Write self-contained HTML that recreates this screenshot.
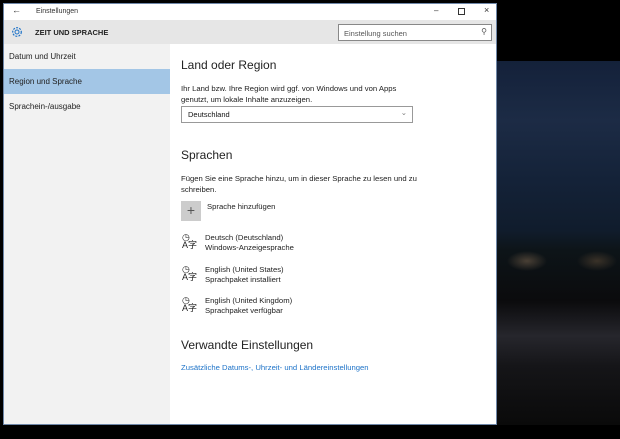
<!DOCTYPE html>
<html><head><meta charset="utf-8"><style>
*{margin:0;padding:0;box-sizing:border-box}
body{width:620px;height:439px;overflow:hidden;position:relative;background:#000;font-family:"Liberation Sans",sans-serif;color:#111}
.bg{position:absolute;left:497px;top:61px;width:123px;height:364px;
background:
radial-gradient(ellipse 20px 10px at 30px 200px,#4a4035 0,transparent 100%),
radial-gradient(ellipse 20px 10px at 100px 200px,#3a3228 0,transparent 100%),
linear-gradient(180deg,#14213a 0,#1c2b45 60px,#142238 120px,#101c2c 170px,#0d1418 190px,#0b0b0d 240px,#26262c 275px,#151518 305px,#0a0a0a 364px)}
.win{position:absolute;left:3px;top:3px;width:494px;height:422px;background:#fff;border:1px solid #6f87a8}
.title{height:16px;background:#fff;font-size:7px;color:#333;position:relative}
.hdr{height:24px;background:#e6e6e6;position:relative}
.side{position:absolute;left:0;top:40px;width:166px;bottom:0;background:#f2f2f2}
.side div{height:25px;line-height:25px;font-size:8px;padding-left:5px;color:#222}
.side .sel{background:#a3c6e6}
.c{position:absolute;left:181px;font-size:7.7px;color:#222}
h2{font-weight:normal;font-size:12px;color:#222;position:absolute;left:181px}
</style></head><body>
<div class="bg"></div>
<div class="win">
<div class="title">
<span style="position:absolute;left:8px;top:1px;font-size:9px">&#8592;</span>
<span style="position:absolute;left:32px;top:4px">Einstellungen</span>
<span style="position:absolute;left:430px;top:2px;font-size:8px">&#8211;</span>
<span style="position:absolute;left:454px;top:4px;width:7px;height:7px;border:1px solid #333"></span>
<span style="position:absolute;left:480px;top:1px;font-size:9px">&#215;</span>
</div>
<div class="hdr">
<svg style="position:absolute;left:7px;top:6px" width="12" height="12" viewBox="0 0 12 12"><circle cx="6" cy="6" r="4.3" fill="none" stroke="#1e73c8" stroke-width="1.2" stroke-dasharray="2 1.2"/><circle cx="6" cy="6" r="2" fill="none" stroke="#1e73c8" stroke-width="1"/></svg>
<span style="position:absolute;left:31px;top:8px;font-size:7.5px;font-weight:bold;color:#222">ZEIT UND SPRACHE</span>
<div style="position:absolute;left:334px;top:4px;width:154px;height:17px;border:1px solid #888;background:#fff;font-size:7.5px;color:#555;padding:4px 5px">Einstellung suchen<span style="position:absolute;right:4px;top:2px;font-size:8px">&#9906;</span></div>
</div>
<div class="side">
<div>Datum und Uhrzeit</div>
<div class="sel">Region und Sprache</div>
<div>Sprachein-/ausgabe</div>
</div>
</div>
<h2 style="top:58px">Land oder Region</h2>
<div class="c" style="top:83px;line-height:11px">Ihr Land bzw. Ihre Region wird ggf. von Windows und von Apps<br>genutzt, um lokale Inhalte anzuzeigen.</div>
<div style="position:absolute;left:181px;top:106px;width:232px;height:17px;border:1px solid #999;font-size:7.5px;padding:3px 6px">Deutschland<span style="position:absolute;right:5px;top:1px;color:#777">&#8964;</span></div>
<h2 style="top:148px">Sprachen</h2>
<div class="c" style="top:173px;line-height:11px">Fügen Sie eine Sprache hinzu, um in dieser Sprache zu lesen und zu<br>schreiben.</div>
<div style="position:absolute;left:181px;top:201px;width:20px;height:20px;background:#ccc;color:#555;font-size:14px;text-align:center;line-height:19px">+</div>
<div class="c" style="top:202px;left:207px">Sprache hinzufügen</div>
<div style="position:absolute;left:182px;top:233px;font-size:9px;line-height:8px;color:#222">&#9719;<br>A字</div>
<div class="c" style="top:233px;left:205px;line-height:10px">Deutsch (Deutschland)<br>Windows-Anzeigesprache</div>
<div style="position:absolute;left:182px;top:265px;font-size:9px;line-height:8px;color:#222">&#9719;<br>A字</div>
<div class="c" style="top:265px;left:205px;line-height:10px">English (United States)<br>Sprachpaket installiert</div>
<div style="position:absolute;left:182px;top:296px;font-size:9px;line-height:8px;color:#222">&#9719;<br>A字</div>
<div class="c" style="top:296px;left:205px;line-height:10px">English (United Kingdom)<br>Sprachpaket verfügbar</div>
<h2 style="top:338px">Verwandte Einstellungen</h2>
<div class="c" style="top:363px;color:#1e73c8">Zusätzliche Datums-, Uhrzeit- und Ländereinstellungen</div>
</body></html>
